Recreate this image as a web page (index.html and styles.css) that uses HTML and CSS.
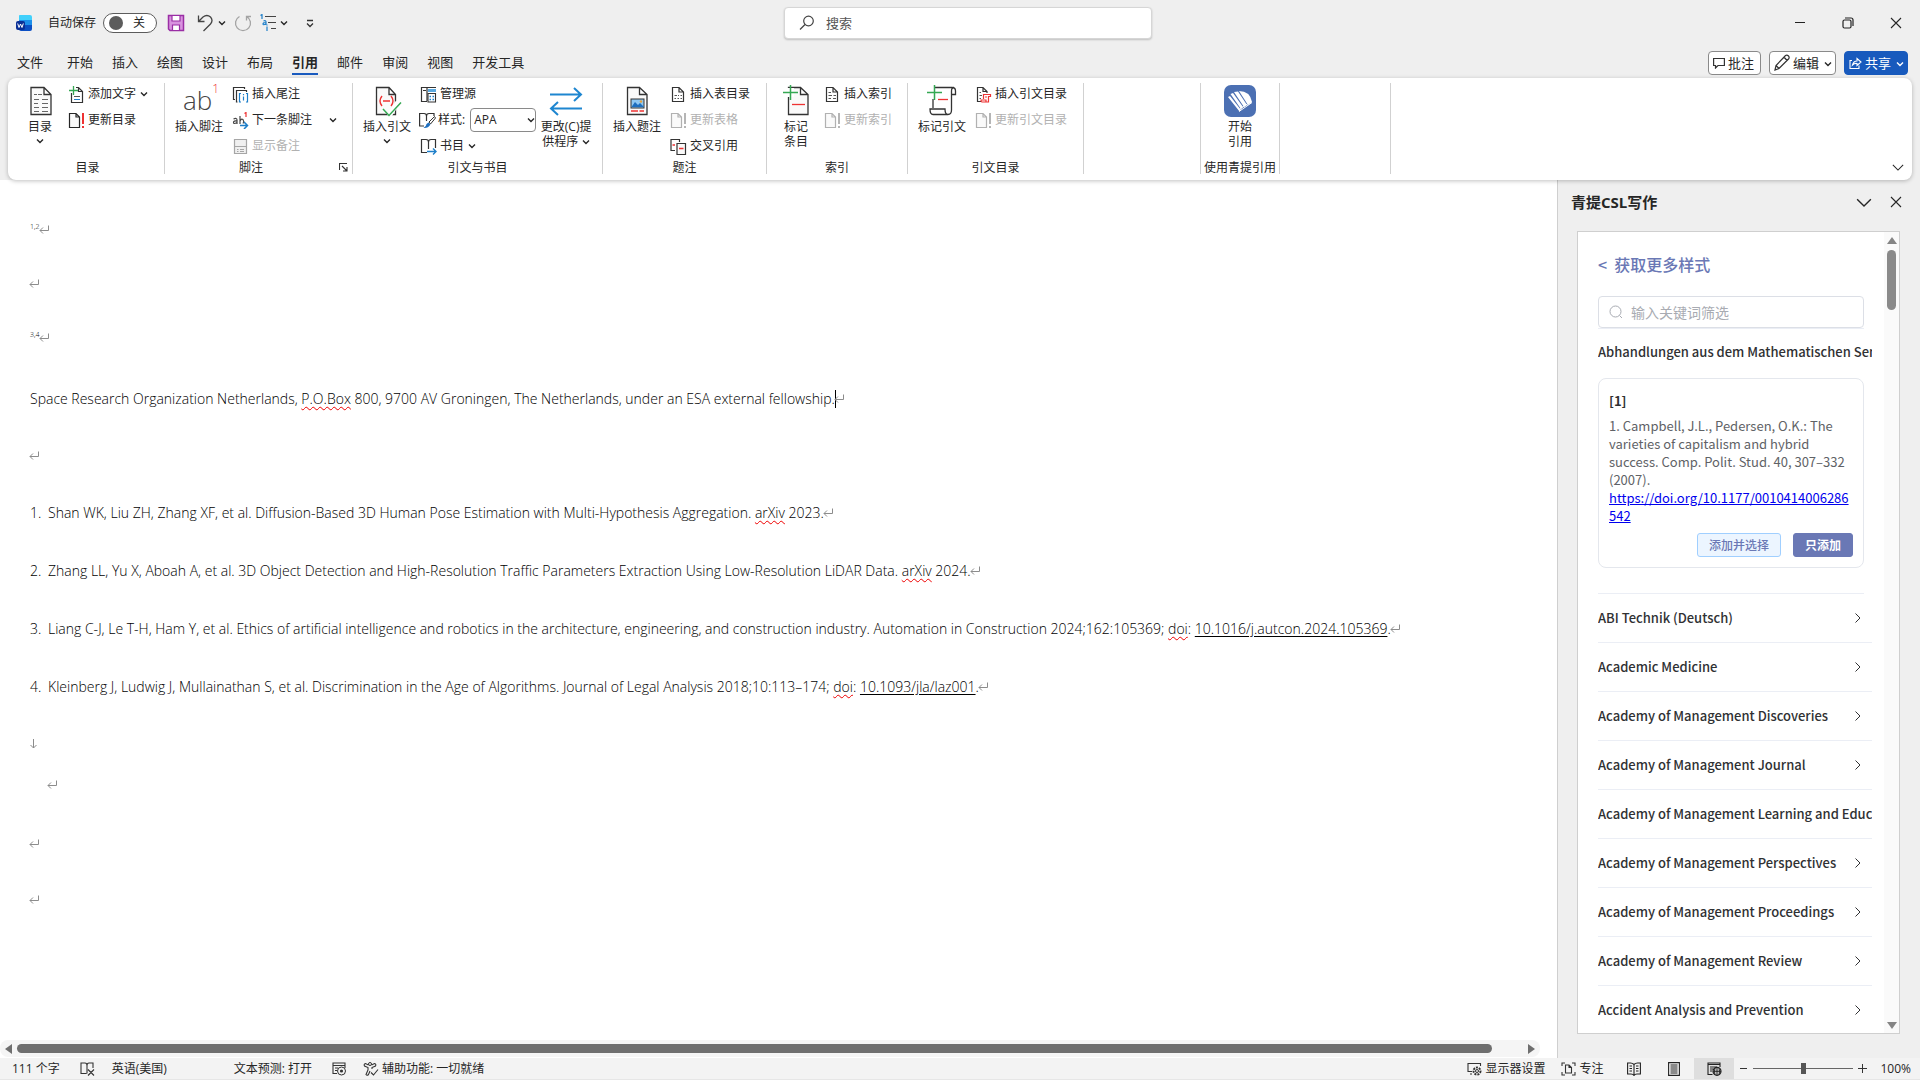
FILE: index.html
```html
<!DOCTYPE html>
<html lang="zh-CN">
<head>
<meta charset="utf-8">
<meta name="viewport" content="width=device-width, initial-scale=1">
<title>Word</title>
<link rel="stylesheet" href="styles.css">
</head>
<body>
<svg class="sprite" aria-hidden="true">
  <symbol id="chev" viewBox="0 0 8 6"><path d="M1 1.500 4 4.500 7 1.500" fill="none" stroke="currentColor" stroke-width="1.400"/></symbol>
  <symbol id="chev-lg" viewBox="0 0 14 14"><path d="M1 4.500 7 10.500 13 4.500" fill="none" stroke="currentColor" stroke-width="1.200"/></symbol>
  <symbol id="close" viewBox="0 0 12 12"><path d="M1 1 11 11M11 1 1 11" fill="none" stroke="currentColor" stroke-width="1.100"/></symbol>
  <symbol id="right" viewBox="0 0 8 12"><path d="M1.500 1.500 6 6 1.500 10.500" fill="none" stroke="currentColor"/></symbol>
  <symbol id="pilcrow" viewBox="0 0 11 10"><path d="M9.500 0.500V5.500H1M4 2.500 1 5.500 4 8.500" fill="none" stroke="currentColor"/></symbol>
  <symbol id="update" viewBox="0 0 17 17"><path d="M1.500 1.500H8L11.500 5V15.500H1.500ZM8 1.500V5H11.500" fill="#fafafa" stroke="currentColor" stroke-width="1.200"/><path class="bang" d="M15 1V12M15 14V16" fill="none" stroke-width="2"/></symbol>
</svg>

<div class="app">
  <header class="titlebar">
    <div class="quick">
      <svg class="logo" viewBox="0 0 16 18"><path d="M3 1.500Q3 1 4 1H14Q16 1 16 3V7H3Z" fill="#41d0fb"/><path d="M3 6H16V12H3Z" fill="#1c8fea"/><path d="M3 11H16V15Q16 17 14 17H5Q3 17 3 15Z" fill="#0b4fc4"/><rect y="7" width="9" height="9" rx="2" fill="#0a2f96"/><path d="M1.700 9.500 3 13.500 4.500 10 6 13.500 7.300 9.500" fill="none" stroke="#fff"/></svg>
      <label class="autosave"><span>自动保存</span><span class="toggle"><input type="checkbox"><i class="knob"></i><span>关</span></span></label>
      <button class="qa" aria-label="保存"><svg width="18" height="18" viewBox="0 0 18 18"><path d="M1.500 1.500H16.500V16.500H3L1.500 15Z" fill="#d893df" stroke="#9a2ea5" stroke-width="1.500"/><path d="M5 1.500H13V7H5ZM5.500 11H12.500V16.500H5.500Z" fill="#fff" stroke="#9a2ea5" stroke-width="1.200"/></svg></button>
      <button class="qa qa-undo" aria-label="撤消"><svg width="17" height="18" viewBox="0 0 17 18"><path d="M1.500 1.500V7.500H7.500M1.500 7.500 6 3Q10 0 13.500 3 16.500 6.500 13.500 10L6.500 17" fill="none" stroke="#444" stroke-width="1.300"/></svg><svg width="8" height="6"><use href="#chev"/></svg></button>
      <button class="qa qa-redo" aria-label="重复"><svg width="18" height="18" viewBox="0 0 18 18"><path d="M5.500 2.500A7.500 7.500 0 1 0 12.500 2.500M12.500 6.500V2.500H17" fill="none" stroke="#a3a3a3" stroke-width="1.300"/></svg></button>
      <button class="qa qa-list" aria-label="多级列表"><svg width="16" height="18" viewBox="0 0 16 18"><path d="M5 2.500H16M8 8.500H16M11 14.500H16" stroke="#444" stroke-width="1.200"/><path d="M0.500 1.500 2 0.500V5M7 12.500V17M7 10.500V11.500" fill="none" stroke="#1e7fc9" stroke-width="1.200"/><path d="M3.500 7Q6 6 6 8V11M6 8.500Q3 8.500 3 10T6 10" fill="none" stroke="#1e7fc9" stroke-width="1.200"/></svg><svg width="8" height="6"><use href="#chev"/></svg></button>
      <button class="qa" aria-label="自定义快速访问工具栏"><svg width="8" height="9" viewBox="0 0 8 9"><path d="M1 1.500H7M1 4.500 4 7.500 7 4.500" fill="none" stroke="#333" stroke-width="1.300"/></svg></button>
    </div>
    <label class="search"><svg width="16" height="16" viewBox="0 0 16 16"><circle cx="9.500" cy="6" r="4.800" fill="none" stroke="#444" stroke-width="1.200"/><path d="M6 9.500 1 14.500" stroke="#444" stroke-width="1.200"/></svg><input type="search" placeholder="搜索" aria-label="搜索"></label>
    <div class="winctl">
      <button aria-label="最小化"><svg width="12" height="12"><path d="M1 5.500H11" stroke="#222"/></svg></button>
      <button aria-label="还原"><svg width="12" height="12" viewBox="0 0 12 12"><rect x="1" y="3" width="8" height="8" rx="1.500" fill="none" stroke="#222" stroke-width="1.200"/><path d="M3 1H9Q11 1 11 3V9" fill="none" stroke="#222" stroke-width="1.200"/></svg></button>
      <button aria-label="关闭"><svg width="12" height="12"><use href="#close"/></svg></button>
    </div>
  </header>

  <div class="tabrow">
    <nav class="tabs">
      <button class="tab tab-file">文件</button><button class="tab">开始</button><button class="tab">插入</button><button class="tab">绘图</button><button class="tab">设计</button><button class="tab">布局</button><button class="tab tab-on">引用</button><button class="tab">邮件</button><button class="tab">审阅</button><button class="tab">视图</button><button class="tab">开发工具</button>
    </nav>
    <div class="actions">
      <button class="act"><svg width="12" height="12" viewBox="0 0 12 12"><path d="M0.600 1.500H11.400V8.500H5L2.500 11V8.500H0.600Z" fill="none" stroke="#333" stroke-width="1.200"/></svg>批注</button>
      <button class="act"><svg width="16" height="17" viewBox="0 0 16 17"><path d="M1 16 2 11.500 11.500 1.500Q13 0.500 14.500 2 15.800 3.500 14.500 5L5 14.500ZM10 3 13 6.500M2 11.500 5 14.500" fill="none" stroke="#333" stroke-width="1.200"/></svg>编辑<svg class="act-chev" width="8" height="6"><use href="#chev"/></svg></button>
      <button class="act act-share"><svg width="13" height="12" viewBox="0 0 13 12"><path d="M3 3.500H1V11.500H10V8.500M3.500 8Q4.500 4 8 4V1.500L12 5 8 8.500V6.500Q5.500 6 3.500 8Z" fill="none" stroke="#fff" stroke-width="1.100"/></svg>共享<svg class="act-chev" width="8" height="6"><use href="#chev"/></svg></button>
    </div>
  </div>

  <section class="ribbon">
    <div class="group g-toc">
      <div class="tools">
        <button class="big big-narrow"><svg width="32" height="32" viewBox="0 0 32 32"><path d="M7 2.500H20L27 9.500V29.500H7ZM20 2.500V9.500H27" fill="#fafafa" stroke="#333" stroke-width="1.300"/><path d="M10 9.500H13M14 9.500H18M10 14.500H15M18 14.500H24M10 18.500H14M18 18.500H24M10 22.500H15M18 22.500H24M10 26.500H15M18 26.500H24" stroke="#666"/></svg>目录<svg width="8" height="6"><use href="#chev"/></svg></button>
        <div class="stack">
          <button class="small"><svg width="17" height="17" viewBox="0 0 17 17"><path d="M3.500 7V16.500H14.500V5.500L10.500 1.500H8M10.500 1.500V5.500H14.500" fill="none" stroke="#333" stroke-width="1.200"/><path d="M5.500 0V9M1 4.500H10" stroke="#35a853" stroke-width="1.300"/><path d="M6 10.500H12" stroke="#555"/><path d="M6 13.500H12" stroke="#1e7fc9"/></svg>添加文字<svg width="8" height="6"><use href="#chev"/></svg></button>
          <button class="small"><svg width="17" height="17"><use href="#update"/></svg>更新目录</button>
        </div>
      </div>
      <div class="caption">目录</div>
    </div>

    <div class="group g-note">
      <div class="tools">
        <button class="big"><span class="ab" aria-hidden="true">ab<sup>1</sup></span>插入脚注</button>
        <div class="stack">
          <button class="small"><svg width="17" height="17" viewBox="0 0 17 17"><path d="M3 13.500H1.500V1.500H12.500V3M5.500 16H4.500V4.500H14.500V6" fill="none" stroke="#333" stroke-width="1.200"/><path d="M9 7.500H7.500V16H9M14 7.500H15.500V16H14M11.500 10.500V14.500M11.500 8V9.300" fill="none" stroke="#1e7fc9" stroke-width="1.200"/></svg>插入尾注</button>
          <button class="small"><svg width="17" height="17" viewBox="0 0 17 17"><path d="M1.500 7Q5 5.500 5 8V12M5 9Q1.500 8.500 1.500 10.500T5 10.500M8 4V12M8 9Q9 6.500 11 7.500 12.500 9.500 11 11.500" fill="none" stroke="#444" stroke-width="1.200"/><path d="M12.500 1.500 14 0.500V5" fill="none" stroke="#e33" stroke-width="1.200"/><path d="M8 13.500H15M12 10 15.500 13.500 12 17" fill="none" stroke="#1e7fc9" stroke-width="1.500"/></svg>下一条脚注<svg class="far" width="8" height="6"><use href="#chev"/></svg></button>
          <button class="small" disabled><svg width="17" height="17" viewBox="0 0 17 17"><path d="M2.500 1.500H14.500V15.500H2.500ZM2.500 8.500H14.500M5 11.500H6.500M8 11.500H12M5 13.500H6.500M8 13.500H12" fill="#f0f0f0" stroke="#a6a6a6" stroke-width="1.200"/></svg>显示备注</button>
        </div>
      </div>
      <div class="caption caption-launch">脚注<button class="launch" aria-label="脚注和尾注"><svg width="9" height="9" viewBox="0 0 9 9"><path d="M0.500 7V0.500H8M3 3 8 8M8 4V8H4" fill="none" stroke="#333" stroke-width="1.100"/></svg></button></div>
    </div>

    <div class="group g-cite">
      <div class="tools">
        <button class="big"><svg width="32" height="32" viewBox="0 0 32 32"><path d="M5.500 2.500H18L24.500 9.500V29.500H5.500ZM18 2.500V9.500H24.500" fill="#fafafa" stroke="#333" stroke-width="1.300"/><path d="M18 31 27 17" stroke="#fff" stroke-width="5"/><path d="M12 24 18 30.500 30 17.500" fill="none" stroke="#35a853" stroke-width="1.500"/><path d="M11 11Q7 16 11 21M20 11Q24 16 20 21M12 16H19" fill="none" stroke="#e33" stroke-width="1.400"/></svg>插入引文<svg width="8" height="6"><use href="#chev"/></svg></button>
        <div class="stack">
          <button class="small"><svg width="17" height="17" viewBox="0 0 17 17"><path d="M7 15.500H1.500V1.500H16M3 4.500H6M7 1.500V15" fill="none" stroke="#333" stroke-width="1.200"/><rect x="8" y="3" width="8" height="3" fill="#5aa9e0"/><path d="M8 7.500H15.500V16H8Z" fill="#fff" stroke="#333" stroke-width="1.100"/><path d="M9.500 10.500H11M12.500 10.500H14M9.500 13.500H11M12.500 13.500H14" stroke="#1e7fc9" stroke-width="1.600"/></svg>管理源</button>
          <div class="stylerow"><svg width="17" height="17" viewBox="0 0 17 17"><path d="M5 14H0.600V1.500H5Q7.500 1.500 7.500 4V9M7.500 4Q7.500 1.500 10 1.500H15V4" fill="none" stroke="#333" stroke-width="1.200"/><path d="M10 10 15.500 4.500 16.500 6 11.500 12Z" fill="#fff" stroke="#333"/><path d="M9.500 10.500 11.500 12.500Q9 16.500 4.500 16 7.500 14 7.500 12Z" fill="#1e6fbf"/></svg><label for="cite-style">样式:</label><span class="pick"><select id="cite-style"><option>APA</option></select><svg width="8" height="6"><use href="#chev"/></svg></span></div>
          <button class="small"><svg width="17" height="17" viewBox="0 0 17 17"><path d="M7 14.500H1.500V1.500H6Q8.500 1.500 8.500 4V11M8.500 4Q8.500 1.500 11 1.500H15.500V10" fill="none" stroke="#333" stroke-width="1.200"/><path d="M7 13.500H16M13 10.500 16 13.500 13 16.500" fill="none" stroke="#1e7fc9" stroke-width="1.400"/></svg>书目<svg width="8" height="6"><use href="#chev"/></svg></button>
        </div>
        <button class="big"><svg width="34" height="32" viewBox="0 0 34 32"><path d="M1 9.500H32M25 3 32 9.500 25 16M33 23.500H2M9 17 2 23.500 9 30" fill="none" stroke="#1e86d0" stroke-width="2"/></svg>更改(C)提<span class="second">供程序<svg width="8" height="6"><use href="#chev"/></svg></span></button>
      </div>
      <div class="caption">引文与书目</div>
    </div>

    <div class="group g-caption">
      <div class="tools">
        <button class="big"><svg width="32" height="32" viewBox="0 0 32 32"><path d="M6.500 2.500H18.500L26 9.500V29.500H6.500ZM18.500 2.500V9.500H26" fill="#fafafa" stroke="#333" stroke-width="1.300"/><rect x="10" y="14" width="13" height="9" fill="#8fc8f2" stroke="#333"/><path d="M10.500 22 14 17 17 20 19 18 23 22Z" fill="#1e6fbf"/><circle cx="20" cy="16.500" r="1.200" fill="#e8a33d"/><path d="M10 26H17M18.500 26H23" stroke="#e33" stroke-width="1.300"/></svg>插入题注</button>
        <div class="stack">
          <button class="small"><svg width="17" height="17" viewBox="0 0 17 17"><path d="M2.500 1.500H9L13.500 6V15.500H2.500ZM9 1.500V6H13.500" fill="none" stroke="#333" stroke-width="1.200"/><path d="M4.500 9.500H7M4.500 12.500H6M8 9.500H9M10.500 9.500H12M7.500 12.500H9M10.500 12.500H12" stroke="#555"/></svg>插入表目录</button>
          <button class="small" disabled><svg width="17" height="17"><use href="#update"/></svg>更新表格</button>
          <button class="small"><svg width="17" height="17" viewBox="0 0 17 17"><path d="M5 12.500H1V1.500H9.500V4" fill="none" stroke="#333" stroke-width="1.200"/><path d="M7 5.500H15.500V16.500H7Z" fill="#fafafa" stroke="#333" stroke-width="1.200"/><path d="M2.500 7H5M9 10.500H13.500" stroke="#e33" stroke-width="1.500"/></svg>交叉引用</button>
        </div>
      </div>
      <div class="caption">题注</div>
    </div>

    <div class="group g-index">
      <div class="tools">
        <button class="big big-narrow"><svg width="32" height="32" viewBox="0 0 32 32"><path d="M8.500 2.500H20.500L28 9.500V29.500H8.500ZM20.500 2.500V9.500H28" fill="#fafafa" stroke="#333" stroke-width="1.300"/><path d="M4 3H14V12H4Z" fill="#fff"/><path d="M10.500 0V15M3 7.500H18" stroke="#35a853" stroke-width="1.500"/><path d="M12 19.500H25" stroke="#e33" stroke-width="1.300"/></svg>标记<span class="second">条目</span></button>
        <div class="stack">
          <button class="small"><svg width="17" height="17" viewBox="0 0 17 17"><path d="M2.500 1.500H9L13.500 6V15.500H2.500ZM9 1.500V6H13.500" fill="none" stroke="#333" stroke-width="1.200"/><path d="M4.500 6.500H7M4.500 9.500H8M9.500 9.500H12M4.500 12.500H7M9 12.500H12" stroke="#555"/></svg>插入索引</button>
          <button class="small" disabled><svg width="17" height="17"><use href="#update"/></svg>更新索引</button>
        </div>
      </div>
      <div class="caption">索引</div>
    </div>

    <div class="group g-auth">
      <div class="tools">
        <button class="big"><svg width="32" height="32" viewBox="0 0 32 32"><path d="M7 23V14M9 2.500H26Q29.500 2.500 29.500 6V9.500H25.500M25.500 9.500V6Q25.500 2.500 28 2.500M25.500 9.500V25Q25.500 29.500 22 29.500 19 29.500 19 24H4Q4 29.500 7 29.500H22" fill="none" stroke="#333" stroke-width="1.300"/><path d="M8.500 0V15M1 7.500H16" stroke="#35a853" stroke-width="1.500"/><path d="M12 14.500H22" stroke="#e33" stroke-width="1.300"/></svg>标记引文</button>
        <div class="stack">
          <button class="small"><svg width="17" height="17" viewBox="0 0 17 17"><path d="M6 15.500H2.500V1.500H8L12 5.500V7M8 1.500V5.500H12" fill="none" stroke="#333" stroke-width="1.200"/><path d="M4.500 6.500H6M4.500 9.500H7M4.500 12.500H6" stroke="#555"/><path d="M8.500 13V8.500H15.500V10.500H13.500V16H7Q6 16 6 14H11V16M10 11H12" fill="none" stroke="#e33" stroke-width="1.200"/></svg>插入引文目录</button>
          <button class="small" disabled><svg width="17" height="17"><use href="#update"/></svg>更新引文目录</button>
        </div>
      </div>
      <div class="caption">引文目录</div>
    </div>

    <div class="group g-blank"></div>

    <div class="group g-qt">
      <div class="tools tools-center">
        <button class="big"><svg width="32" height="32" viewBox="0 0 32 32"><rect width="32" height="32" rx="7" fill="#4c70b3"/><path d="M15 6Q26 6 28 17L24 20Z" fill="#fff"/><path d="M10 7 14 6.500 23 20 20 22ZM6.500 9 9 8 19 22 17 24ZM4 12 6 11 17 25 15.500 26.500Z" fill="#fff"/><path d="M15 26.500 28 17.500M16 24 27 16.500" stroke="#fff"/></svg>开始<span class="second">引用</span></button>
      </div>
      <div class="caption">使用青提引用</div>
    </div>
    <div class="group g-last"></div>
    <button class="collapse" aria-label="折叠功能区"><svg width="12" height="12"><use href="#chev-lg"/></svg></button>
  </section>

  <main class="work">
    <section class="docarea">
      <article class="doc" lang="en">
        <p class="para para-cite"><sup>1,2</sup><svg class="mark"><use href="#pilcrow"/></svg></p>
        <p class="para para-empty"><svg class="mark"><use href="#pilcrow"/></svg></p>
        <p class="para para-cite"><sup>3,4</sup><svg class="mark"><use href="#pilcrow"/></svg></p>
        <p class="para para-body">Space Research Organization Netherlands, <span class="typo">P.O.Box</span> 800, 9700 AV Groningen, The Netherlands, under an ESA external fellowship.<i class="caret"></i><svg class="mark"><use href="#pilcrow"/></svg></p>
        <p class="para para-empty"><svg class="mark"><use href="#pilcrow"/></svg></p>
        <p class="para"><span class="num">1.</span>Shan WK, Liu ZH, Zhang XF, et al. Diffusion-Based 3D Human Pose Estimation with Multi-Hypothesis Aggregation. <span class="typo">arXiv</span> 2023.<svg class="mark"><use href="#pilcrow"/></svg></p>
        <p class="para"><span class="num">2.</span>Zhang LL, Yu X, Aboah A, et al. 3D Object Detection and High-Resolution Traffic Parameters Extraction Using Low-Resolution LiDAR Data. <span class="typo">arXiv</span> 2024.<svg class="mark"><use href="#pilcrow"/></svg></p>
        <p class="para"><span class="num">3.</span>Liang C-J, Le T-H, Ham Y, et al. Ethics of artificial intelligence and robotics in the architecture, engineering, and construction industry. Automation in Construction 2024;162:105369; <span class="typo">doi</span>: <a href="#ref3">10.1016/j.autcon.2024.105369</a>.<svg class="mark"><use href="#pilcrow"/></svg></p>
        <p class="para"><span class="num">4.</span>Kleinberg J, Ludwig J, Mullainathan S, et al. Discrimination in the Age of Algorithms. Journal of Legal Analysis 2018;10:113–174; <span class="typo">doi</span>: <a href="#ref4">10.1093/jla/laz001</a>.<svg class="mark"><use href="#pilcrow"/></svg></p>
        <p class="para para-empty"><svg class="mark" viewBox="0 0 11 10"><path d="M4.500 0V9M1.500 6 4.500 9 7.500 6" fill="none" stroke="currentColor"/></svg></p>
        <p class="para para-break"><svg class="mark"><use href="#pilcrow"/></svg></p>
        <p class="para para-empty"><svg class="mark"><use href="#pilcrow"/></svg></p>
        <p class="para para-empty"><svg class="mark"><use href="#pilcrow"/></svg></p>
      </article>
      <div class="hscroll"><i class="tri tri-left"></i><i class="hthumb"></i><i class="tri tri-right"></i></div>
    </section>

    <aside class="pane">
      <header class="pane-head"><h2>青提CSL写作</h2><button aria-label="任务窗格选项"><svg width="16" height="16"><use href="#chev-lg"/></svg></button><button aria-label="关闭"><svg width="12" height="12"><use href="#close"/></svg></button></header>
      <div class="frame">
        <div class="csl">
          <a class="back" href="#styles"><span>&lt;</span>获取更多样式</a>
          <div class="filter"><label><svg width="14" height="14" viewBox="0 0 14 14"><circle cx="6.500" cy="6.500" r="5.500" fill="none" stroke="#a8abb2"/><path d="M10.500 10.500 13 13" stroke="#a8abb2"/></svg><input type="text" placeholder="输入关键词筛选" aria-label="输入关键词筛选"></label></div>
          <button class="open">Abhandlungen aus dem Mathematischen Seminar</button>
          <div class="detail">
            <div class="card">
              <strong>[1]</strong>
              <p>1. Campbell, J.L., Pedersen, O.K.: The varieties of capitalism and hybrid success. Comp. Polit. Stud. 40, 307–332 (2007). <a href="https://doi.org/10.1177/0010414006286542">https://doi.org/10.1177/0010414006286542</a></p>
              <div class="card-btns"><button class="btn">添加并选择</button><button class="btn btn-main">只添加</button></div>
            </div>
          </div>
          <button class="row"><span>ABI Technik (Deutsch)</span><svg width="8" height="12"><use href="#right"/></svg></button>
          <button class="row"><span>Academic Medicine</span><svg width="8" height="12"><use href="#right"/></svg></button>
          <button class="row"><span>Academy of Management Discoveries</span><svg width="8" height="12"><use href="#right"/></svg></button>
          <button class="row"><span>Academy of Management Journal</span><svg width="8" height="12"><use href="#right"/></svg></button>
          <button class="row"><span>Academy of Management Learning and Education</span><svg width="8" height="12"><use href="#right"/></svg></button>
          <button class="row"><span>Academy of Management Perspectives</span><svg width="8" height="12"><use href="#right"/></svg></button>
          <button class="row"><span>Academy of Management Proceedings</span><svg width="8" height="12"><use href="#right"/></svg></button>
          <button class="row"><span>Academy of Management Review</span><svg width="8" height="12"><use href="#right"/></svg></button>
          <button class="row"><span>Accident Analysis and Prevention</span><svg width="8" height="12"><use href="#right"/></svg></button>
        </div>
        <div class="vscroll"><i class="tri tri-up"></i><i class="vthumb"></i><i class="tri tri-down"></i></div>
      </div>
    </aside>
  </main>

  <footer class="status">
    <button class="st">111 个字</button>
    <button class="st st-proof" aria-label="校对"><svg width="15" height="14" viewBox="0 0 15 14"><path d="M6.500 11.500H1V1H5Q7 1 7 3.500V11.500M7 3.500Q7 1 9 1H13V6M8 7.500 14 13.500M14 7.500 8 13.500" fill="none" stroke="#333" stroke-width="1.100"/></svg></button>
    <button class="st st-lang">英语(美国)</button>
    <button class="st">文本预测: 打开</button>
    <button class="st st-macro" aria-label="宏录制"><svg width="15" height="14" viewBox="0 0 15 14"><path d="M5 11.500H1V1H13V6M1 3.500H13M3 6H6M3 8.500H5" fill="none" stroke="#333" stroke-width="1.100"/><circle cx="9.500" cy="9" r="4" fill="none" stroke="#333"/><circle cx="9.500" cy="9" r="1.600" fill="#333"/></svg></button>
    <button class="st"><svg width="16" height="14" viewBox="0 0 16 14"><circle cx="7" cy="2" r="1.500" fill="none" stroke="#333"/><path d="M5.500 3 2.500 1.500Q0.500 2 1.500 4L5 5.500V8L3 12.500Q4 14 5.500 12.500L7 9M8.500 3 11.500 1.500Q13.500 2 12.500 4L9 5.500V7M8 10.500 10.500 13 15 7.500" fill="none" stroke="#333" stroke-width="1.100"/></svg>辅助功能: 一切就绪</button>
    <span class="fill"></span>
    <button class="st st-gear"><svg width="15" height="14" viewBox="0 0 15 14"><path d="M5 9.500H1V1.500H13.500V4M3 12H5" fill="none" stroke="#333" stroke-width="1.100"/><circle cx="10" cy="9" r="3.500" fill="none" stroke="#333" stroke-width="2" stroke-dasharray="2 1"/><circle cx="10" cy="9" r="1.500" fill="none" stroke="#333"/></svg>显示器设置</button>
    <button class="st st-focus"><svg width="15" height="14" viewBox="0 0 15 14"><path d="M1 4V1H4M11 1H14V4M14 10V13H11M4 13H1V10M4.500 3H8L10.500 5.500V11H4.500ZM8 3V5.500H10.500" fill="none" stroke="#333" stroke-width="1.100"/></svg>专注</button>
    <button class="view" aria-label="阅读视图"><svg width="14" height="14" viewBox="0 0 14 14"><path d="M7 2.500Q5.500 1 3.500 1H0.600V12H4Q6 12 7 13.500 8 12 10 12H13.400V1H10.500Q8.500 1 7 2.500V13M2.500 4H5M2.500 6.500H5M2.500 9H5M9 4H11.500M9 6.500H11.500M9 9H11.500" fill="none" stroke="#222" stroke-width="1.100"/></svg></button>
    <button class="view" aria-label="页面视图"><svg width="14" height="14" viewBox="0 0 14 14"><path d="M1.600 0.600H12.400V13.400H1.600ZM3.500 3H10.500M3.500 5H10.500M3.500 7H10.500M3.500 9H10.500M3.500 11H10.500" fill="none" stroke="#222" stroke-width="1.100"/></svg></button>
    <button class="view view-on" aria-label="Web 版式视图"><svg width="15" height="14" viewBox="0 0 15 14"><path d="M5.500 12.500H1V1H13V5M1 2.500H13M3 5H10M3 7H6M3 9H5" fill="none" stroke="#222" stroke-width="1.100"/><circle cx="10" cy="9.300" r="4" fill="#ddd" stroke="#222" stroke-width="1.200"/><path d="M6 9.300H14M10 5.300V13.300M8 6Q7 9.300 8 13M12 6Q13 9.300 12 13" fill="none" stroke="#222"/></svg></button>
    <button class="zoombtn" aria-label="缩小"><svg width="9" height="9"><path d="M1 4.500H8" stroke="#333"/></svg></button>
    <input class="zoom" type="range" min="0" max="100" value="50" aria-label="显示比例">
    <button class="zoombtn" aria-label="放大"><svg width="9" height="9"><path d="M0 4.500H9M4.500 0V9" stroke="#333"/></svg></button>
    <button class="st st-pct">100%</button>
  </footer>
</div>
</body>
</html>
```
FILE: styles.css
```css
* { box-sizing: border-box; }
body {
  margin: 0;
  background: #efefef;
  color: #262626;
  font: 12px/16px "Open Sans", "Noto Sans CJK SC", sans-serif;
}
button, input, select { font: inherit; color: inherit; }
button { margin: 0; padding: 0; border: 0; background: none; white-space: nowrap; }
input { min-width: 0; border: 0; outline: 0; background: none; }
svg { flex: none; display: block; }
p, h2 { margin: 0; }
.sprite { display: none; }

.app { display: flex; flex-direction: column; height: 100vh; overflow: hidden; }

/* title bar */
.titlebar { display: grid; grid-template-columns: 1fr 368px 1fr; align-items: center; height: 46px; padding-left: 16px; }
.quick { display: flex; align-items: center; }
.logo { width: 16px; height: 18px; }
.autosave { display: flex; align-items: center; gap: 7px; margin: 0 10px 0 16px; }
.toggle { display: flex; align-items: center; gap: 10px; width: 54px; height: 20px; padding-left: 5px; border: 1px solid #5c5c5c; border-radius: 10px; background: #fff; }
.toggle input { position: absolute; opacity: 0; }
.knob { width: 14px; height: 14px; border-radius: 50%; background: #5c5c5c; }
.qa { display: flex; align-items: center; gap: 4px; margin-right: 12px; }
.qa-undo { margin-right: 8px; }
.qa-redo { margin-right: 8px; }
.qa-list { margin-right: 18px; }
.search { display: flex; align-items: center; gap: 11px; height: 32px; padding: 0 14px; border: 1px solid #d6d6d6; border-radius: 4px; background: #fff; box-shadow: 0 1px 2px rgba(0, 0, 0, .2); font-size: 13px; }
.search input { flex: 1; padding: 0; }
.search input::placeholder { color: #555; }
.winctl { display: flex; justify-content: flex-end; }
.winctl button { display: flex; justify-content: center; width: 48px; }

/* tabs */
.tabrow { display: flex; justify-content: space-between; height: 32px; padding: 0 12px 0 8px; font-size: 13px; }
.tabs { display: flex; }
.tab { height: 29px; margin: 0 10px 0 9px; padding-top: 6px; border-bottom: 2px solid transparent; line-height: 21px; }
.tab-file { margin-right: 15px; }
.tab-on { border-color: #1a5bbf; font-weight: 700; }
.actions { display: flex; gap: 8px; padding-top: 5px; }
.act { display: flex; align-items: center; gap: 3px; height: 24px; padding: 0 6px 1px 4px; border: 1px solid #8a8a8a; border-radius: 4px; background: #fff; }
.act-chev { margin: 2px -3px 0 2px; }
.act-share { border-color: #185abd; background: #185abd; color: #fff; }

/* ribbon */
.ribbon { position: relative; z-index: 1; display: flex; flex: none; height: 102px; margin: 0 8px; padding: 5px 3px 6px; border-radius: 8px; background: #fff; box-shadow: 0 1px 4px rgba(0, 0, 0, .25); }
.group { display: flex; flex-direction: column; justify-content: space-between; flex: none; padding: 0 4px; border-right: 1px solid #d1d1d1; }
.g-toc { width: 154px; }
.g-note { width: 188px; }
.g-cite { width: 250px; }
.g-caption { width: 164px; }
.g-index { width: 141px; }
.g-auth { width: 176px; }
.g-blank { width: 117px; }
.g-qt { width: 79px; padding: 0; }
.g-last { width: 111px; }
.tools { display: flex; gap: 3px; height: 78px; }
.tools-center { justify-content: center; }
.caption { line-height: 13px; text-align: center; }
.caption-launch { display: flex; }
.caption-launch::before { content: ""; flex: 0 0 70px; }
.launch { align-self: center; margin-left: auto; }
.big { display: flex; flex-direction: column; align-items: center; width: 60px; padding-top: 2px; }
.big > svg:first-child { margin-bottom: 2px; }
.big > svg + svg { margin-top: 3px; }
.big-narrow { width: 50px; }
.second { display: flex; align-items: center; gap: 4px; line-height: 14px; }
.ab { display: flex; height: 34px; padding-left: 4px; color: #444; font-size: 26px; font-weight: 300; line-height: 30px; }
.ab sup { color: #e33; font-size: 12px; line-height: 8px; }
.stack { display: flex; flex-direction: column; }
.g-cite .stack { margin-right: -3px; }
.small { display: flex; align-items: center; gap: 3px; height: 26px; }
.small:first-child { height: 24px; padding-bottom: 2px; }
.small > svg + svg { margin-left: 1px; }
.small > svg + .far { margin-left: 14px; }
.small:disabled { --bang: #b5b5b5; color: #b1b1b1; }
.bang { stroke: var(--bang, #e33); }
.stylerow { display: flex; align-items: center; gap: 2px; height: 26px; margin-left: -1px; white-space: nowrap; }
.pick { display: flex; align-items: center; width: 66px; height: 24px; margin-left: 3px; border: 1px solid #8a8a8a; border-radius: 4px; }
.pick select { flex: 1; margin-right: -14px; padding: 0 0 0 3px; border: 0; outline: 0; background: none; appearance: none; }
.collapse { display: flex; align-items: flex-end; margin: 0 5px 0 auto; padding-bottom: 1px; }

/* document */
.work { display: flex; flex: 1; min-height: 0; }
.docarea { display: flex; flex-direction: column; flex: 1; min-width: 0; background: #fff; }
.doc { flex: 1; min-height: 0; overflow: hidden; padding: 24px 30px 0; color: #000; font: 300 14px/58px "Open Sans", sans-serif; white-space: nowrap; }
.para-cite { line-height: 52px; }
.para-cite sup { font-size: 7px; line-height: 0; }
.para-empty { line-height: 56px; }
.para-body { margin-top: 6px; }
.para-break { padding-left: 18px; line-height: 26px; margin-bottom: 18px; }
.num { display: inline-block; width: 18px; }
.para a { color: inherit; text-decoration: underline; text-underline-offset: 2px; }
.typo { text-decoration: underline wavy #e00 1px; text-underline-offset: 2px; text-decoration-skip-ink: none; }
.mark { display: inline-block; width: 11px; height: 10px; margin-left: -1px; color: #8c8c8c; }
.caret { display: inline-block; width: 1px; height: 18px; margin-right: -1px; background: #000; vertical-align: -4px; }
.hscroll { display: flex; align-items: center; flex: none; height: 17px; margin: 0 17px 1px 0; padding: 0 5px; border-radius: 8px; background: #f5f5f5; }
.hthumb { flex: 1; height: 9px; margin: 0 36px 0 5px; border-radius: 5px; background: #6f6f6f; }
.tri { flex: none; width: 0; height: 0; border: 5px solid transparent; }
.tri-left { border-left: 0; border-right: 7px solid #6f6f6f; }
.tri-right { border-right: 0; border-left: 7px solid #6f6f6f; }
.tri-up { border-top: 0; border-bottom: 7px solid #858585; }
.tri-down { border-bottom: 0; border-top: 7px solid #858585; }

/* task pane */
.pane { display: flex; flex-direction: column; flex: none; width: 363px; padding: 0 20px 24px 19px; border-left: 1px solid #cfcfcf; }
.pane-head { display: flex; align-items: center; gap: 18px; height: 51px; margin: 0 -2px 0 -6px; padding-bottom: 7px; }
.pane-head h2 { flex: 1; font-size: 15px; font-weight: 700; }
.frame { display: flex; flex: 1; min-height: 0; border: 1px solid #cfcfcf; background: #fff; }
.csl { flex: 1; min-width: 0; overflow: hidden; padding: 19px 12px 0 20px; color: #303133; font: 500 13px/20px "Noto Sans CJK SC", sans-serif; }
.back { display: flex; gap: 7px; color: #6a78b5; font-size: 16px; line-height: 26px; text-decoration: none; }
.filter { margin: 19px 8px 13px 0; border-bottom: 1px solid #ebeef5; font-size: 14px; }
.filter label { display: flex; align-items: center; gap: 8px; height: 32px; padding: 0 10px 1px; border: 1px solid #dcdfe6; border-radius: 4px; }
.filter input { flex: 1; padding: 0; font-weight: 400; }
.filter input::placeholder { color: #a8abb2; }
.open { display: block; width: 100%; overflow: hidden; text-align: left; }
.detail { margin: 16px 8px 0 0; padding-bottom: 25px; border-bottom: 1px solid #ebeef5; }
.card { padding: 12px 10px 10px; border: 1px solid #e4e7ed; border-radius: 8px; }
.card strong { display: block; font-weight: 700; }
.card p { margin: 6px 0 8px; color: #606266; font-weight: 400; line-height: 18px; overflow-wrap: anywhere; }
.card a { color: #00e; }
.card-btns { display: flex; justify-content: flex-end; gap: 12px; }
.btn { height: 24px; padding: 0 11px; border: 1px solid #a0cfff; border-radius: 3px; background: #ecf5ff; color: #6a78b5; font-size: 12px; line-height: 20px; }
.btn-main { border-color: #6a78b5; background: #6a78b5; color: #fff; font-weight: 700; }
.row { display: flex; align-items: center; width: 100%; height: 49px; padding-right: 10px; border-bottom: 1px solid #ebeef5; overflow: hidden; }
.row span { flex: none; margin-right: auto; }
.vscroll { display: flex; flex-direction: column; align-items: center; justify-content: space-between; width: 15px; padding: 5px 0 4px; background: #fafafa; }
.vthumb { width: 9px; height: 60px; margin: 6px 0 auto; border-radius: 5px; background: #8a8a8a; }

/* status bar */
.status { display: flex; align-items: center; flex: none; height: 22px; padding: 0 9px 0 12px; border-bottom: 1px solid #e6e6e6; background: #f3f3f3; }
.st { display: flex; align-items: center; gap: 3px; margin-right: 20px; }
.st-proof { margin-right: 17px; }
.st-lang { margin-right: 67px; }
.st-macro { margin-right: 16px; }
.fill { flex: 1; }
.st-gear { margin-right: 16px; }
.st-focus { margin-right: 11px; }
.view { display: flex; align-items: center; justify-content: center; width: 40px; height: 21px; }
.view-on { background: #dedede; }
.zoombtn { margin: 0 5px; }
.zoom { width: 100px; height: 20px; margin: 0; appearance: none; background: linear-gradient(#666, #666) center / 100% 1px no-repeat; }
.zoom::-webkit-slider-thumb { appearance: none; width: 5px; height: 11px; background: #555; }
.st-pct { margin: 0 0 0 8px; }
```
